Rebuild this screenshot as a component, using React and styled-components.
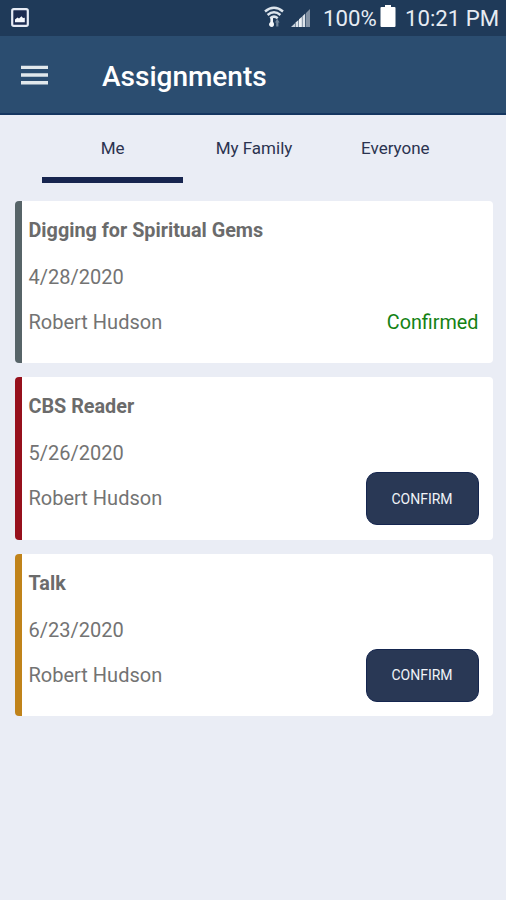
import React from 'react'
import styled, { createGlobalStyle } from 'styled-components'

const assignments = [
    { title: 'Digging for Spiritual Gems', date: '4/28/2020', name: 'Robert Hudson', color: '#576468', confirmed: true },
    { title: 'CBS Reader', date: '5/26/2020', name: 'Robert Hudson', color: '#96101c', confirmed: false },
    { title: 'Talk', date: '6/23/2020', name: 'Robert Hudson', color: '#c0831a', confirmed: false },
]

const tabs = ['Me', 'My Family', 'Everyone']

function App() {
    return (
        <Screen>
            <GlobalStyle />
            <StatusBar>
                <ScreenshotIcon />
                <StatusRight>
                    <WifiIcon />
                    <SignalIcon />
                    <Percent>100%</Percent>
                    <BatteryIcon />
                    <Clock>10:21 PM</Clock>
                </StatusRight>
            </StatusBar>
            <Header>
                <MenuButton aria-label="Menu">
                    <MenuIcon />
                </MenuButton>
                <Title>Assignments</Title>
            </Header>
            <Tabs>
                {tabs.map((tab, i) => (
                    <Tab key={tab} $active={i === 0}>{tab}</Tab>
                ))}
            </Tabs>
            <List>
                {assignments.map((item) => (
                    <Card key={item.date} $color={item.color}>
                        <CardTitle>{item.title}</CardTitle>
                        <CardText>{item.date}</CardText>
                        <CardBottom>
                            <CardText>{item.name}</CardText>
                            {item.confirmed
                                ? <Confirmed>Confirmed</Confirmed>
                                : <ConfirmButton>CONFIRM</ConfirmButton>}
                        </CardBottom>
                    </Card>
                ))}
            </List>
        </Screen>
    )
}

function ScreenshotIcon() {
    return (
        <svg width="18" height="19" viewBox="0 0 18 19">
            <rect x="1.2" y="1.2" width="15.6" height="16.6" rx="1.6" fill="#1b2b50" stroke="#e6ebf5" strokeWidth="2.2" />
            <path d="M4 14.2V11.5L6.5 9.5L8 10.5L10.5 8.2L12 10L13.8 9.8V14.2Z" fill="#f4f7fc" />
        </svg>
    )
}

function MenuIcon() {
    return (
        <svg width="27" height="20" viewBox="0 0 27 20">
            <path d="M0 2.4H27M0 10H27M0 17.7H27" stroke="#e1e8ec" strokeWidth="3.4" />
        </svg>
    )
}

function WifiIcon() {
    return (
        <svg width="20" height="22" viewBox="0 0 20 22">
            <g fill="none" stroke="#dce4ec" strokeWidth="2.5">
                <path d="M1 5.4Q10 -1.8 19 5.4" />
                <path d="M3.6 9Q10 3.6 16.4 9" />
                <path d="M6.3 12.2Q10 9 13.7 12.2" />
            </g>
            <path d="M8 21C5.8 21 5 19.6 5 18.3C5 17 6.4 16.6 6.4 15.5V12H9V16C10.6 17 10.4 21 8 21Z" fill="#f2f5f8" />
            <path d="M13.2 12.8L15.6 16.4H14.4V20.4H12.2V16.4H11Z" fill="#71859a" />
        </svg>
    )
}

function SignalIcon() {
    return (
        <svg width="19" height="18" viewBox="0 0 19 18">
            <path d="M0 18L4 14.2V18Z" fill="#c8d1db" />
            <path d="M4.5 13.6L7.5 11V18H4.5Z" fill="#dce3ea" />
            <path d="M8 10.3L10.9 7.8V18H8Z" fill="#edf1f5" />
            <path d="M11.4 7.2L14.2 4.6V18H11.4Z" fill="#dce3ea" />
            <path d="M15 4L19 0V18H15Z" fill="#8392a4" />
        </svg>
    )
}

function BatteryIcon() {
    return (
        <svg width="16" height="22" viewBox="0 0 16 22">
            <path d="M5 0H11V2H14.5Q15.5 2 15.5 3V21Q15.5 22 14.5 22H1.5Q.5 22 .5 21V3Q.5 2 1.5 2H5Z" fill="#fff" />
        </svg>
    )
}

export default App

const GlobalStyle = createGlobalStyle`
*{
    box-sizing:border-box;
}
body{
    margin:0;
    background-color:#eaedf5;
    font-family:Roboto, sans-serif;
}
`
const Screen = styled.div`
width:506px;
height:900px;
overflow:hidden;
background-color:#eaedf5;
`
const StatusBar = styled.div`
display:flex;
justify-content:space-between;
align-items:flex-start;
height:36px;
padding:8px 9px 0 11px;
background-color:#1f3a59;
`
const StatusRight = styled.div`
display:flex;
align-items:flex-start;
color:#e6ecf3;
font-size:22.2px;
line-height:20px;
white-space:nowrap;
svg{
    flex:none;
    margin-top:-2px;
}
svg:nth-of-type(2){
    margin:1px 0 0 7px;
}
svg:nth-of-type(3){
    margin:-3px 0 0 4px;
}
`
const Percent = styled.span`
width:53px;
margin-left:13px;
`
const Clock = styled.span`
width:92px;
margin-left:9px;
`
const Header = styled.header`
display:flex;
align-items:center;
height:79px;
padding-left:21px;
background-color:#2b4d70;
border-bottom:2px solid #153660;
`
const MenuButton = styled.button`
display:flex;
width:27px;
margin-top:1px;
padding:0;
border:0;
background:none;
cursor:pointer;
`
const Title = styled.h1`
margin:5px 0 0 54px;
color:#fff;
font-size:28px;
font-weight:500;
line-height:32px;
`
const Tabs = styled.nav`
display:flex;
height:69px;
padding:0 40px 0 42px;
`
const Tab = styled.div`
width:141.5px;
height:68px;
padding-top:22px;
border-bottom:6px solid ${(props) => (props.$active ? '#17254f' : 'transparent')};
color:#2b3350;
font-size:17px;
line-height:22px;
text-align:center;
cursor:pointer;
`
const List = styled.main`
display:flex;
flex-direction:column;
gap:14.3px;
padding:17px 13.5px 0 14.5px;
`
const Card = styled.section`
height:162.2px;
padding:18px 14px 0 7px;
border-left:7.5px solid ${(props) => props.$color};
border-radius:4px;
background-color:#fff;
`
const CardTitle = styled.h2`
margin:0 0 21.7px;
color:#6b6b6b;
font-size:19.8px;
font-weight:700;
line-height:24px;
`
const CardText = styled.div`
color:#737373;
font-size:20px;
line-height:24px;
`
const CardBottom = styled.div`
display:flex;
align-items:flex-start;
justify-content:space-between;
margin-top:7px;
${CardText}{
    margin-top:14px;
}
`
const Confirmed = styled.span`
margin-top:15px;
color:#148214;
font-size:19.8px;
line-height:24px;
`
const ConfirmButton = styled.button`
width:113px;
height:53px;
padding:0;
border:1px solid #15264f;
border-radius:11px;
background-color:#293855;
color:#f0f3f8;
font-family:inherit;
font-size:14px;
font-weight:400;
cursor:pointer;
`
